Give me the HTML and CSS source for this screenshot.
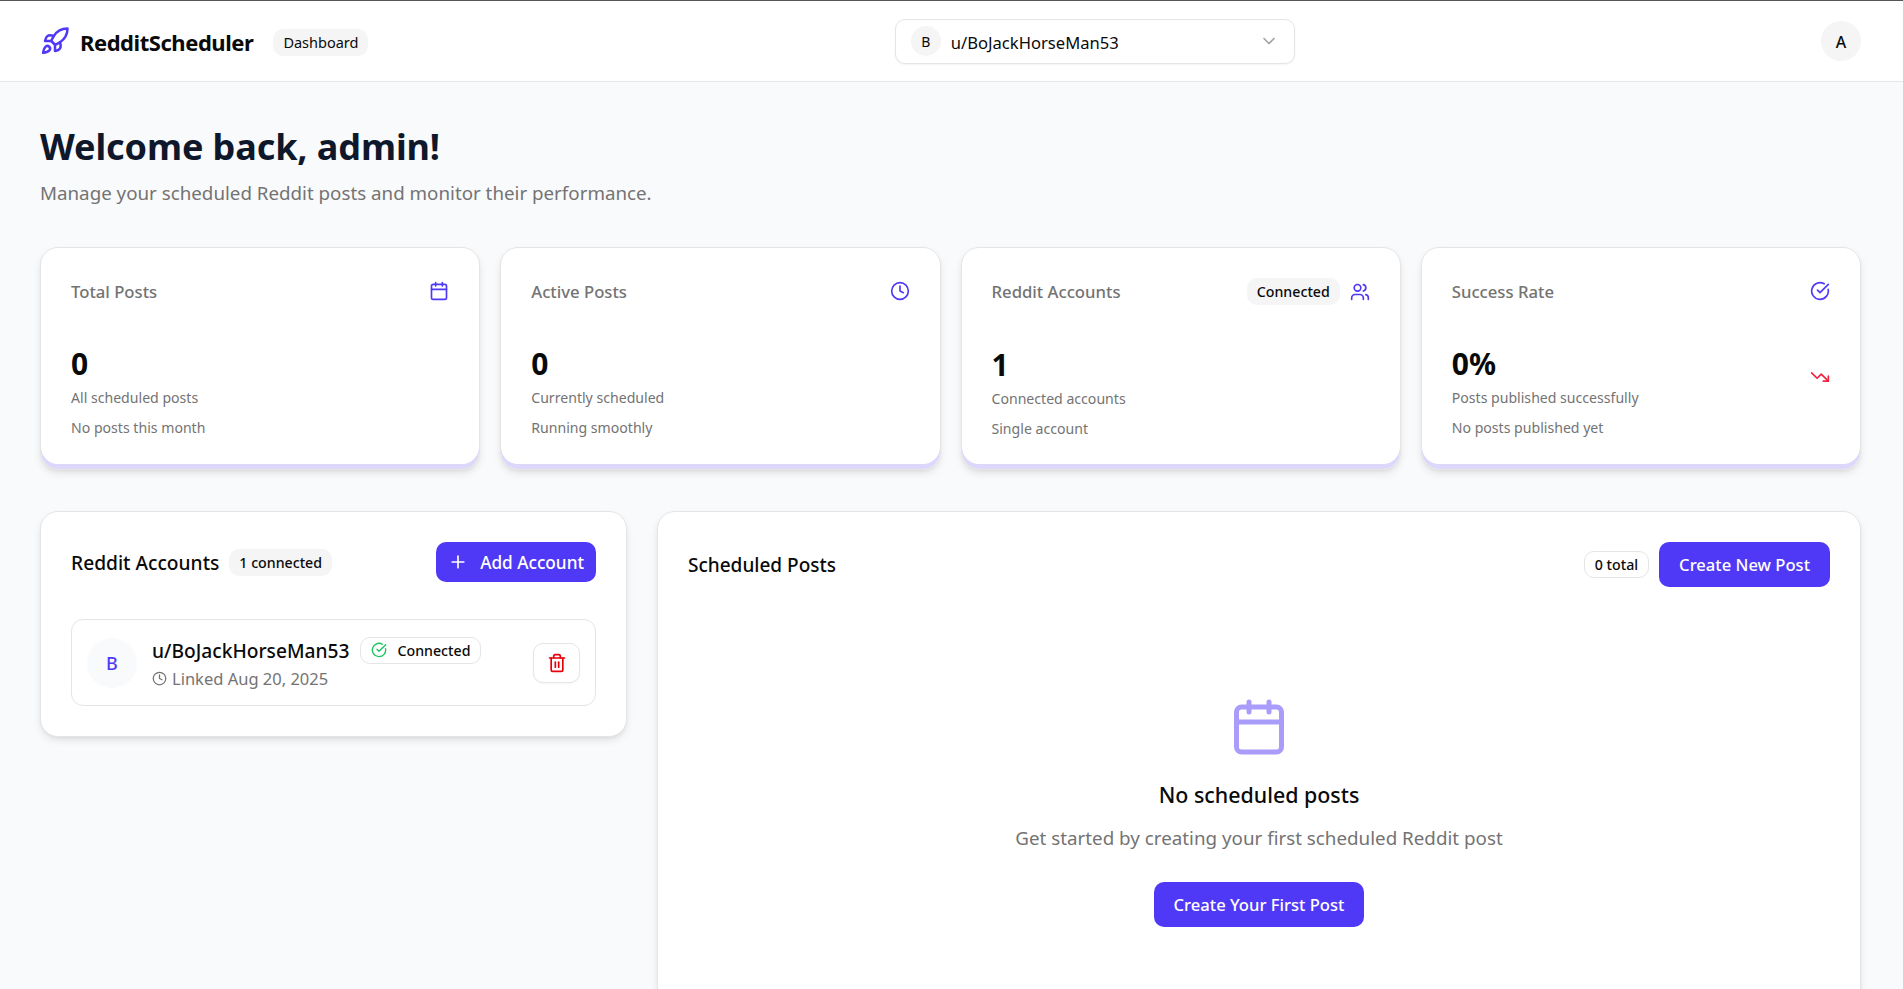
FILE: index.html
```html
<!DOCTYPE html>
<html lang="en">
<head>
    <meta charset="UTF-8">
    <meta name="viewport" content="width=device-width, initial-scale=1.0">
    <title>RedditScheduler - Dashboard</title>
    <link rel="stylesheet" href="styles.css">
</head>
<body>
<header class="topbar">
  <div class="brand">
    <svg class="icon brand-logo" viewBox="0 0 24 24"><path d="M4.5 16.5c-1.5 1.26-2 5-2 5s3.74-.5 5-2c.71-.84.7-2.13-.09-2.91a2.18 2.18 0 0 0-2.91-.09z"/><path d="m12 15-3-3a22 22 0 0 1 2-3.95A12.88 12.88 0 0 1 22 2c0 2.72-.78 7.5-6 11a22.35 22.35 0 0 1-4 2z"/><path d="M9 12H4s.55-3.03 2-4c1.62-1.08 5 0 5 0"/><path d="M12 15v5s3.03-.55 4-2c1.08-1.62 0-5 0-5"/></svg>
    <span class="brand-name">RedditScheduler</span>
    <span class="badge badge-nav">Dashboard</span>
  </div>
  <div class="account-select">
    <span class="select-initial">B</span>
    <span class="select-name">u/BoJackHorseMan53</span>
    <svg class="icon select-chevron" viewBox="0 0 24 24"><path d="m6 9 6 6 6-6"/></svg>
  </div>
  <span class="user-avatar">A</span>
</header>

<main class="page">
  <h1 class="welcome">Welcome back, admin!</h1>
  <p class="welcome-sub">Manage your scheduled Reddit posts and monitor their performance.</p>

  <section class="stats">
    <div class="card stat">
      <div class="stat-head">
        <span class="stat-title">Total Posts</span>
        <svg class="icon stat-icon" viewBox="0 0 24 24"><path d="M8 2v4"/><path d="M16 2v4"/><rect x="3" y="4" width="18" height="18" rx="2"/><path d="M3 10h18"/></svg>
      </div>
      <div class="stat-value">0</div>
      <p class="stat-note">All scheduled posts</p>
      <p class="stat-note stat-note-last">No posts this month</p>
    </div>

    <div class="card stat">
      <div class="stat-head">
        <span class="stat-title">Active Posts</span>
        <svg class="icon stat-icon" viewBox="0 0 24 24"><circle cx="12" cy="12" r="10"/><polyline points="12 6 12 12 16 14"/></svg>
      </div>
      <div class="stat-value">0</div>
      <p class="stat-note">Currently scheduled</p>
      <p class="stat-note stat-note-last">Running smoothly</p>
    </div>

    <div class="card stat">
      <div class="stat-head">
        <span class="stat-title">Reddit Accounts</span>
        <div class="stat-head-end">
          <span class="badge badge-stat">Connected</span>
          <svg class="icon stat-icon" viewBox="0 0 24 24"><path d="M16 21v-2a4 4 0 0 0-4-4H6a4 4 0 0 0-4 4v2"/><circle cx="9" cy="7" r="4"/><path d="M22 21v-2a4 4 0 0 0-3-3.87"/><path d="M16 3.13a4 4 0 0 1 0 7.75"/></svg>
        </div>
      </div>
      <div class="stat-value">1</div>
      <p class="stat-note">Connected accounts</p>
      <p class="stat-note stat-note-last">Single account</p>
    </div>

    <div class="card stat">
      <div class="stat-head">
        <span class="stat-title">Success Rate</span>
        <svg class="icon stat-icon" viewBox="0 0 24 24"><path d="M21.801 10A10 10 0 1 1 17 3.335"/><path d="m9 11 3 3L22 4"/></svg>
      </div>
      <div class="stat-row">
        <div>
          <div class="stat-value">0%</div>
          <p class="stat-note">Posts published successfully</p>
        </div>
        <svg class="icon trend-icon" viewBox="0 0 24 24"><polyline points="22 17 13.5 8.5 8.5 13.5 2 7"/><polyline points="16 17 22 17 22 11"/></svg>
      </div>
      <p class="stat-note stat-note-last">No posts published yet</p>
    </div>
  </section>

  <section class="panels">
    <div class="card panel panel-accounts">
      <div class="panel-head">
        <div class="panel-title-group">
          <h2 class="panel-title panel-title-accounts">Reddit Accounts</h2>
          <span class="badge badge-count">1 connected</span>
        </div>
        <button type="button" class="btn btn-add">
          <svg class="icon btn-icon" viewBox="0 0 24 24"><path d="M5 12h14"/><path d="M12 5v14"/></svg>
          Add Account
        </button>
      </div>
      <div class="account-row">
        <span class="account-initial">B</span>
        <div class="account-info">
          <div class="account-line">
            <span class="account-name">u/BoJackHorseMan53</span>
            <span class="badge badge-outline badge-connected">
              <svg class="icon check-icon" viewBox="0 0 24 24"><path d="M21.801 10A10 10 0 1 1 17 3.335"/><path d="m9 11 3 3L22 4"/></svg>
              Connected
            </span>
          </div>
          <div class="account-linked">
            <svg class="icon clock-icon" viewBox="0 0 24 24"><circle cx="12" cy="12" r="10"/><polyline points="12 6 12 12 16 14"/></svg>
            Linked Aug 20, 2025
          </div>
        </div>
        <button type="button" class="trash-btn">
          <svg class="icon trash-icon" viewBox="0 0 24 24"><path d="M3 6h18"/><path d="M19 6v14c0 1-1 2-2 2H7c-1 0-2-1-2-2V6"/><path d="M8 6V4c0-1 1-2 2-2h4c1 0 2 1 2 2v2"/><line x1="10" y1="11" x2="10" y2="17"/><line x1="14" y1="11" x2="14" y2="17"/></svg>
        </button>
      </div>
    </div>

    <div class="card panel panel-posts">
      <div class="panel-head">
        <h2 class="panel-title">Scheduled Posts</h2>
        <div class="panel-head-end">
          <span class="badge badge-outline badge-total">0 total</span>
          <button type="button" class="btn btn-create">Create New Post</button>
        </div>
      </div>
      <div class="empty">
        <svg class="icon empty-icon" viewBox="0 0 24 24"><path d="M8 2v4"/><path d="M16 2v4"/><rect x="3" y="4" width="18" height="18" rx="2"/><path d="M3 10h18"/></svg>
        <h3 class="empty-title">No scheduled posts</h3>
        <p class="empty-text">Get started by creating your first scheduled Reddit post</p>
        <button type="button" class="btn btn-create">Create Your First Post</button>
      </div>
    </div>
  </section>
</main>
</body>
</html>
```

FILE: styles.css
```css
* {
  box-sizing: border-box;
}
html, body {
  height: 989px;
  overflow: hidden;
}
body {
  margin: 0;
  background-color: #f9fafb;
  color: #0a0a0a;
  font-family: "Noto Sans", "Open Sans", Arial, sans-serif;
  border-top: 1px solid #555;
}
h1, h2, h3, p {
  margin: 0;
}
button {
  font-family: inherit;
  cursor: pointer;
}
.icon {
  fill: none;
  stroke: currentColor;
  stroke-width: 2;
  stroke-linecap: round;
  stroke-linejoin: round;
  flex-shrink: 0;
  display: block;
}

/* top bar */
.topbar {
  height: 81px;
  padding: 0 42px 0 40px;
  background: #fff;
  border-bottom: 1px solid #e5e7eb;
  display: flex;
  align-items: center;
  justify-content: space-between;
}
.brand {
  display: flex;
  align-items: center;
}
.brand-logo {
  width: 30px;
  height: 30px;
  color: #5039f6;
  margin-right: 10px;
}
.brand-name {
  font-size: 22px;
  font-weight: 700;
  letter-spacing: -0.45px;
  margin-right: 20px;
  padding-top: 1px;
}
.badge {
  display: inline-flex;
  align-items: center;
  height: 27px;
  border-radius: 10px;
  background: #f5f5f5;
  font-size: 14.2px;
  font-weight: 500;
  padding: 0 10px;
  white-space: nowrap;
}
.badge-nav {
  font-size: 14.5px;
  font-weight: 400;
  margin-top: 2px;
}
.badge-outline {
  background: #fff;
  border: 1px solid #e5e5e5;
}
.account-select {
  width: 400px;
  height: 45px;
  border: 1px solid #e5e5e5;
  border-radius: 10px;
  background: #fff;
  box-shadow: 0 1px 2px rgba(0, 0, 0, 0.05);
  display: flex;
  align-items: center;
  padding: 0 15px;
}
.select-initial {
  width: 30px;
  height: 30px;
  border-radius: 50%;
  background: #f5f5f5;
  display: flex;
  align-items: center;
  justify-content: center;
  font-size: 14px;
  margin-right: 10px;
}
.select-name {
  font-size: 16.6px;
  flex: 1;
  padding-top: 2px;
}
.select-chevron {
  width: 20px;
  height: 20px;
  color: #a3a3a3;
}
.user-avatar {
  width: 40px;
  height: 40px;
  border-radius: 50%;
  background: #f5f5f5;
  display: flex;
  align-items: center;
  justify-content: center;
  font-size: 16px;
  font-weight: 500;
  padding-top: 1px;
}

/* page */
.page {
  padding: 41px 42px 0 40px;
}
.welcome {
  font-size: 36px;
  line-height: 48px;
  font-weight: 700;
  color: #0f172a;
  letter-spacing: -0.1px;
}
.welcome-sub {
  font-size: 18.75px;
  line-height: 28px;
  color: #737373;
  margin-top: 8px;
}
.card {
  background: #fff;
  border: 1px solid #e5e5e5;
  border-radius: 18px;
  box-shadow: 0 4px 8px -1px rgba(0, 0, 0, 0.1), 0 2px 4px -2px rgba(0, 0, 0, 0.08);
}
.stats {
  display: grid;
  grid-template-columns: repeat(4, 1fr);
  gap: 20px;
  margin-top: 40px;
}
.stat {
  height: 223px;
  padding: 30px;
  box-shadow: inset 0 -5px 0 #ddd8fb, 0 4px 8px -1px rgba(0, 0, 0, 0.1), 0 2px 4px -2px rgba(0, 0, 0, 0.08);
}
.stat-head {
  display: flex;
  align-items: center;
  justify-content: space-between;
  min-height: 26px;
  margin-bottom: 41px;
}
.stat-head-end {
  display: flex;
  align-items: center;
  gap: 10px;
}
.stat-title {
  font-size: 16.7px;
  font-weight: 500;
  color: #737373;
}
.stat-icon {
  width: 20px;
  height: 20px;
  color: #5039f6;
}
.stat-value {
  font-size: 30px;
  line-height: 38px;
  font-weight: 700;
}
.stat-note {
  font-size: 14.1px;
  line-height: 20px;
  color: #737373;
  margin-top: 5px;
}
.stat-note-last {
  margin-top: 10px;
}
.stat-row {
  display: flex;
  align-items: center;
  justify-content: space-between;
}
.trend-icon {
  width: 20px;
  height: 20px;
  color: #f0243f;
}

/* lower panels */
.panels {
  display: grid;
  grid-template-columns: 587px 1fr;
  gap: 30px;
  margin-top: 41px;
  align-items: start;
}
.panel {
  padding: 30px;
}
.panel-posts {
  height: 600px;
}
.panel-head {
  display: flex;
  align-items: center;
  justify-content: space-between;
}
.panel-title-group, .panel-head-end {
  display: flex;
  align-items: center;
  gap: 10px;
}
.panel-title {
  font-size: 19px;
  font-weight: 500;
}
.panel-title-accounts {
  font-size: 19.2px;
}
.btn {
  border: 0;
  border-radius: 10px;
  background: #5039f6;
  color: #fff;
  font-size: 16.6px;
  font-weight: 500;
}
.btn-add {
  height: 40px;
  padding: 0 12px;
  display: flex;
  align-items: center;
  gap: 12px;
  font-size: 17.2px;
}
.btn-icon {
  width: 20px;
  height: 20px;
}
.btn-create {
  height: 45px;
  padding: 0 20px;
}
.account-row {
  margin-top: 37px;
  height: 87px;
  border: 1px solid #e5e5e5;
  border-radius: 12px;
  display: flex;
  align-items: center;
  padding: 0 15px;
}
.account-initial {
  width: 50px;
  height: 50px;
  border-radius: 50%;
  background: #f9fafb;
  color: #5039f6;
  display: flex;
  align-items: center;
  justify-content: center;
  font-size: 18px;
  font-weight: 500;
  margin-right: 15px;
}
.account-info {
  flex: 1;
  padding-top: 1px;
}
.account-line {
  display: flex;
  align-items: center;
  gap: 11px;
}
.account-name {
  font-size: 19.2px;
  font-weight: 500;
}
.badge-connected {
  gap: 10px;
}
.check-icon {
  width: 16px;
  height: 16px;
  color: #16c55e;
}
.account-linked {
  display: flex;
  align-items: center;
  gap: 5px;
  font-size: 16.5px;
  color: #737373;
  margin-top: 3px;
}
.clock-icon {
  width: 15px;
  height: 15px;
}
.trash-btn {
  width: 47px;
  height: 40px;
  border: 1px solid #e5e5e5;
  border-radius: 10px;
  background: #fff;
  display: flex;
  align-items: center;
  justify-content: center;
  padding: 0;
  box-shadow: 0 1px 2px rgba(0, 0, 0, 0.04);
}
.trash-icon {
  width: 20px;
  height: 20px;
  color: #e7000b;
}

/* empty state */
.empty {
  display: flex;
  flex-direction: column;
  align-items: center;
  padding-top: 110px;
}
.empty-icon {
  width: 60px;
  height: 60px;
  color: #a99cfa;
}
.empty-title {
  font-size: 21.4px;
  font-weight: 500;
  line-height: 30px;
  margin-top: 23px;
}
.empty-text {
  font-size: 18.8px;
  line-height: 28px;
  color: #737373;
  margin-top: 14px;
  margin-bottom: 30px;
}
```
